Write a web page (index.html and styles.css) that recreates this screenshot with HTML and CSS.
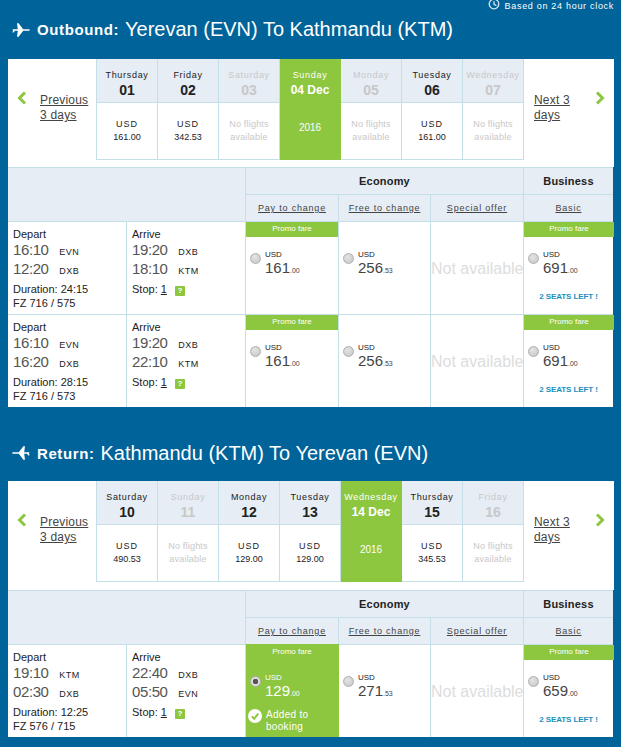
FILE: index.html
```html
<!DOCTYPE html>
<html lang="en">
<head>
    <meta charset="UTF-8">
    <meta name="viewport" content="width=device-width, initial-scale=1.0">
    <title>Select flights</title>
    <link rel="stylesheet" href="styles.css">
</head>
<body>
    <div class="clock-note">
        <svg class="clock-icon" viewBox="0 0 12 12"><circle cx="6" cy="5" r="4.800"/><path d="M6 2.200v3l2.400 1.400"/></svg>
        Based on 24 hour clock
    </div>

    <h2 class="leg-title">
        <svg class="plane-icon" viewBox="0 0 20 16"><path d="M1 7.200h5.800L6 1.200h1.600l4.600 6H17c1.400 0 2 .4 2 .8s-.6.8-2 .8h-4.800l-4.600 6H6l.8-6H4l-1.400 1.600H1.400L2.200 8 1 7.200z"/></svg>
        <b>Outbound:</b> <span>Yerevan (EVN) To Kathmandu (KTM)</span>
    </h2>

    <div class="panel">
        <div class="date-strip">
            <a class="page-link"><svg class="chevron" viewBox="0 0 10 14"><path d="M8 1.500L2.500 7 8 12.500"/></svg><u>Previous 3 days</u></a>
            <div class="day"><div class="day-name">Thursday<strong>01</strong></div><div class="day-price">USD<br><span>161.00</span></div></div>
            <div class="day"><div class="day-name">Friday<strong>02</strong></div><div class="day-price">USD<br><span>342.53</span></div></div>
            <div class="day off"><div class="day-name">Saturday<strong>03</strong></div><div class="day-price">No flights<br>available</div></div>
            <div class="day selected"><div class="day-name">Sunday<strong>04 Dec</strong></div><div class="day-price">2016</div></div>
            <div class="day off"><div class="day-name">Monday<strong>05</strong></div><div class="day-price">No flights<br>available</div></div>
            <div class="day"><div class="day-name">Tuesday<strong>06</strong></div><div class="day-price">USD<br><span>161.00</span></div></div>
            <div class="day off"><div class="day-name">Wednesday<strong>07</strong></div><div class="day-price">No flights<br>available</div></div>
            <a class="page-link next"><u>Next 3 days</u><svg class="chevron" viewBox="0 0 10 14"><path d="M2 1.500L7.500 7 2 12.500"/></svg></a>
        </div>

        <div class="fare-table">
            <div class="head-blank"></div>
            <div class="head-cabin economy">Economy</div>
            <div class="head-cabin">Business</div>
            <div class="head-fare"><u>Pay to change</u></div>
            <div class="head-fare"><u>Free to change</u></div>
            <div class="head-fare"><u>Special offer</u></div>
            <div class="head-fare"><u>Basic</u></div>

            <div class="times">
                <p>Depart</p>
                <div class="time">16:10 <small>EVN</small></div>
                <div class="time">12:20 <small>DXB</small></div>
                <p class="gap">Duration: 24:15</p>
                <p>FZ 716 / 575</p>
            </div>
            <div class="times">
                <p>Arrive</p>
                <div class="time">19:20 <small>DXB</small></div>
                <div class="time">18:10 <small>KTM</small></div>
                <p class="gap">Stop: <u>1</u> <i class="help">?</i></p>
            </div>
            <div class="fare"><div class="promo">Promo fare</div><div class="price-line"><i class="radio"></i><div class="price"><em>USD</em>161<sub>.00</sub></div></div></div>
            <div class="fare"><div class="price-line plain"><i class="radio"></i><div class="price"><em>USD</em>256<sub>.53</sub></div></div></div>
            <div class="fare none">Not available</div>
            <div class="fare"><div class="promo">Promo fare</div><div class="price-line"><i class="radio"></i><div class="price"><em>USD</em>691<sub>.00</sub></div></div><div class="seats">2 SEATS LEFT !</div></div>

            <div class="times">
                <p>Depart</p>
                <div class="time">16:10 <small>EVN</small></div>
                <div class="time">16:20 <small>DXB</small></div>
                <p class="gap">Duration: 28:15</p>
                <p>FZ 716 / 573</p>
            </div>
            <div class="times">
                <p>Arrive</p>
                <div class="time">19:20 <small>DXB</small></div>
                <div class="time">22:10 <small>KTM</small></div>
                <p class="gap">Stop: <u>1</u> <i class="help">?</i></p>
            </div>
            <div class="fare"><div class="promo">Promo fare</div><div class="price-line"><i class="radio"></i><div class="price"><em>USD</em>161<sub>.00</sub></div></div></div>
            <div class="fare"><div class="price-line plain"><i class="radio"></i><div class="price"><em>USD</em>256<sub>.53</sub></div></div></div>
            <div class="fare none">Not available</div>
            <div class="fare"><div class="promo">Promo fare</div><div class="price-line"><i class="radio"></i><div class="price"><em>USD</em>691<sub>.00</sub></div></div><div class="seats">2 SEATS LEFT !</div></div>
        </div>
    </div>

    <h2 class="leg-title return">
        <svg class="plane-icon" viewBox="0 0 20 16"><path d="M19 7.200h-5.800l.8-6h-1.600l-4.600 6H3c-1.400 0-2 .4-2 .8s.6.8 2 .8h4.800l4.600 6H14l-.8-6H16l1.400 1.600h1.200L17.800 8 19 7.200z"/></svg>
        <b>Return:</b> <span>Kathmandu (KTM) To Yerevan (EVN)</span>
    </h2>

    <div class="panel">
        <div class="date-strip">
            <a class="page-link"><svg class="chevron" viewBox="0 0 10 14"><path d="M8 1.500L2.500 7 8 12.500"/></svg><u>Previous 3 days</u></a>
            <div class="day"><div class="day-name">Saturday<strong>10</strong></div><div class="day-price">USD<br><span>490.53</span></div></div>
            <div class="day off"><div class="day-name">Sunday<strong>11</strong></div><div class="day-price">No flights<br>available</div></div>
            <div class="day"><div class="day-name">Monday<strong>12</strong></div><div class="day-price">USD<br><span>129.00</span></div></div>
            <div class="day"><div class="day-name">Tuesday<strong>13</strong></div><div class="day-price">USD<br><span>129.00</span></div></div>
            <div class="day selected"><div class="day-name">Wednesday<strong>14 Dec</strong></div><div class="day-price">2016</div></div>
            <div class="day"><div class="day-name">Thursday<strong>15</strong></div><div class="day-price">USD<br><span>345.53</span></div></div>
            <div class="day off"><div class="day-name">Friday<strong>16</strong></div><div class="day-price">No flights<br>available</div></div>
            <a class="page-link next"><u>Next 3 days</u><svg class="chevron" viewBox="0 0 10 14"><path d="M2 1.500L7.500 7 2 12.500"/></svg></a>
        </div>

        <div class="fare-table">
            <div class="head-blank"></div>
            <div class="head-cabin economy">Economy</div>
            <div class="head-cabin">Business</div>
            <div class="head-fare"><u>Pay to change</u></div>
            <div class="head-fare"><u>Free to change</u></div>
            <div class="head-fare"><u>Special offer</u></div>
            <div class="head-fare"><u>Basic</u></div>

            <div class="times">
                <p>Depart</p>
                <div class="time">19:10 <small>KTM</small></div>
                <div class="time">02:30 <small>DXB</small></div>
                <p class="gap">Duration: 12:25</p>
                <p>FZ 576 / 715</p>
            </div>
            <div class="times">
                <p>Arrive</p>
                <div class="time">22:40 <small>DXB</small></div>
                <div class="time">05:50 <small>EVN</small></div>
                <p class="gap">Stop: <u>1</u> <i class="help">?</i></p>
            </div>
            <div class="fare chosen">
                <div class="promo">Promo fare</div>
                <div class="price-line"><i class="radio"></i><div class="price"><em>USD</em>129<sub>.00</sub></div></div>
                <div class="added">
                    <svg class="tick" viewBox="0 0 14 14"><circle cx="7" cy="7" r="7"/><path d="M3.800 7.400l2.300 2.300 4.200-5"/></svg>
                    <span>Added to booking</span>
                </div>
            </div>
            <div class="fare"><div class="price-line plain"><i class="radio"></i><div class="price"><em>USD</em>271<sub>.53</sub></div></div></div>
            <div class="fare none">Not available</div>
            <div class="fare"><div class="promo">Promo fare</div><div class="price-line"><i class="radio"></i><div class="price"><em>USD</em>659<sub>.00</sub></div></div><div class="seats">2 SEATS LEFT !</div></div>
        </div>
    </div>
</body>
</html>
```

FILE: styles.css
```css
* {
    box-sizing: border-box;
}

html {
    height: 747px;
    overflow: hidden;
}

body {
    margin: 0;
    padding: 0 7px 0 8px;
    height: 747px;
    overflow: hidden;
    background: #006399;
    font-family: "Liberation Sans", Arial, sans-serif;
    color: #222;
}

p {
    margin: 0;
}

.clock-note {
    display: flex;
    justify-content: flex-end;
    align-items: center;
    gap: 5px;
    height: 12px;
    color: #fff;
    font-size: 9px;
    letter-spacing: .7px;
}

.clock-icon {
    flex: none;
    width: 12px;
    height: 12px;
    margin-top: -3px;
    fill: none;
    stroke: #d5e8f2;
    stroke-width: 1.300;
}

.leg-title {
    display: flex;
    align-items: center;
    gap: 6px;
    height: 47px;
    margin: 0;
    padding: 0 0 12px 3px;
    color: #fff;
    font-weight: normal;
    font-size: 20px;
    white-space: nowrap;
}

.leg-title b {
    font-size: 15px;
    letter-spacing: .6px;
}

.leg-title.return {
    height: 74px;
    padding: 18px 0 0 3px;
}

.plane-icon {
    flex: none;
    width: 20px;
    height: 16px;
    fill: #fff;
}

.date-strip {
    display: grid;
    grid-template-columns: 89px repeat(7, 61px) 1fr;
    height: 108px;
    align-items: start;
    background: #fff;
}

.return + .panel .date-strip {
    height: 109px;
}

.page-link {
    display: flex;
    align-items: flex-start;
    gap: 13px;
    padding: 34px 0 0 9px;
    color: #444;
    font-size: 12px;
    line-height: 15px;
    letter-spacing: .2px;
}

.page-link.next {
    justify-content: space-between;
    padding: 34px 9px 0 10px;
}

.page-link u {
    width: 50px;
}

.page-link.next u {
    width: 40px;
}

.chevron {
    flex: none;
    width: 10px;
    height: 14px;
    margin-top: -2px;
    fill: none;
    stroke: #8dc63f;
    stroke-width: 3;
}

.day {
    height: 101px;
    border-right: 1px solid #c5dfe9;
    border-bottom: 1px solid #c5dfe9;
    text-align: center;
}

.day:nth-child(2) {
    box-shadow: -1px 0 0 #c5dfe9;
}

.day-name {
    height: 44px;
    padding-top: 11px;
    background: #e6edf5;
    border-bottom: 1px solid #c5dfe9;
    font-size: 9px;
    letter-spacing: .7px;
    white-space: nowrap;
}

.day-name strong {
    display: block;
    margin-top: 2px;
    font-size: 14px;
    line-height: 16px;
    letter-spacing: 0;
}

.day-price {
    padding-top: 15px;
    font-size: 9px;
    line-height: 13px;
    letter-spacing: 1px;
}

.day-price span {
    letter-spacing: 0;
}

.off .day-name,
.off .day-price {
    color: #c8c8c8;
}

.off .day-price {
    letter-spacing: .2px;
}

.selected {
    background: #8dc63f;
    border-color: #8dc63f;
    color: #fff;
}

.selected .day-name {
    background: none;
    border-bottom: 0;
}

.selected .day-name strong {
    font-size: 12px;
}

.selected .day-price {
    padding-top: 18px;
    font-size: 10px;
    letter-spacing: 0;
}

.fare-table {
    display: grid;
    grid-template-columns: 119px 119px 93px 92px 93px 89px;
    grid-template-rows: 27px 26px;
    grid-auto-rows: 93px;
    width: 605px;
    background: #fff;
    border-top: 1px solid #c5dfe9;
}

.head-blank {
    grid-column: 1 / 3;
    grid-row: 1 / 3;
    background: #e6edf5;
    border-right: 1px solid #c5dfe9;
}

.head-cabin {
    display: flex;
    align-items: center;
    justify-content: center;
    background: #e6edf5;
    font-size: 11px;
    font-weight: bold;
    letter-spacing: .2px;
    border-bottom: 1px solid #c5dfe9;
}

.head-cabin.economy {
    grid-column: 3 / 6;
    border-right: 1px solid #c5dfe9;
}

.head-fare {
    display: flex;
    align-items: center;
    justify-content: center;
    background: #e6edf5;
    color: #444;
    font-size: 9px;
    letter-spacing: .8px;
    border-right: 1px solid #c5dfe9;
}

.head-fare:nth-child(7) {
    border-right: 0;
}

.times {
    padding: 6px 0 0 5px;
    border-top: 1px solid #c5dfe9;
    border-right: 1px solid #c5dfe9;
    font-size: 11px;
    line-height: 14px;
}

.times p:first-child {
    line-height: 12px;
}

.time {
    height: 19px;
    color: #555;
    font-size: 15px;
    line-height: 19px;
    letter-spacing: -.4px;
}

.time small {
    margin-left: 7px;
    color: #222;
    font-size: 9px;
    letter-spacing: .5px;
}

.gap {
    margin-top: 4px;
}

.help {
    display: inline-block;
    width: 10px;
    height: 10px;
    margin-left: 5px;
    background: #8dc63f;
    border-radius: 1px;
    color: #fff;
    font-size: 8px;
    font-style: normal;
    font-weight: bold;
    line-height: 10px;
    text-align: center;
}

.fare {
    border-top: 1px solid #c5dfe9;
    border-right: 1px solid #c5dfe9;
}

.fare:nth-child(6n+1) {
    border-right: 0;
}

.fare:nth-child(6n+1) .promo {
    margin-right: -1px;
}

.promo {
    height: 15px;
    background: #8dc63f;
    color: #fff;
    font-size: 8px;
    line-height: 14px;
    text-align: center;
}

.price-line {
    display: flex;
    gap: 4px;
    padding: 13px 0 0 4px;
}

.price-line.plain {
    padding-top: 28px;
}

.radio {
    flex: none;
    width: 11px;
    height: 11px;
    margin-top: 3px;
    background: radial-gradient(circle at 40% 35%, #e4e4e4, #c4c4c4);
    border: 1px solid #b0b0b0;
    border-radius: 50%;
}

.price {
    font-size: 15px;
    line-height: 16px;
    color: #444;
}

.price em {
    display: block;
    color: #222;
    font-size: 8px;
    font-style: normal;
    line-height: 10px;
}

.price sub {
    font-size: 7px;
    vertical-align: baseline;
}

.none {
    padding-top: 38px;
    color: #ddd;
    font-size: 16px;
    text-align: center;
    white-space: nowrap;
}

.seats {
    margin-top: 13px;
    color: #1b8fc0;
    font-size: 8px;
    font-weight: bold;
    letter-spacing: -.1px;
    text-align: center;
}

.chosen {
    background: #8dc63f;
    border-color: #8dc63f;
    color: #fff;
}

.chosen .price,
.chosen .price em {
    color: #fff;
}

.chosen .radio {
    background: radial-gradient(circle, #555 0 2.500px, #ddd 3px);
}

.added {
    display: flex;
    gap: 4px;
    margin-top: 7px;
    padding-left: 2px;
    font-size: 10px;
    line-height: 12px;
}

.added span {
    width: 50px;
    letter-spacing: .3px;
}

.tick {
    flex: none;
    width: 14px;
    height: 14px;
}

.tick circle {
    fill: #fff;
}

.tick path {
    fill: none;
    stroke: #8dc63f;
    stroke-width: 2;
}
```
